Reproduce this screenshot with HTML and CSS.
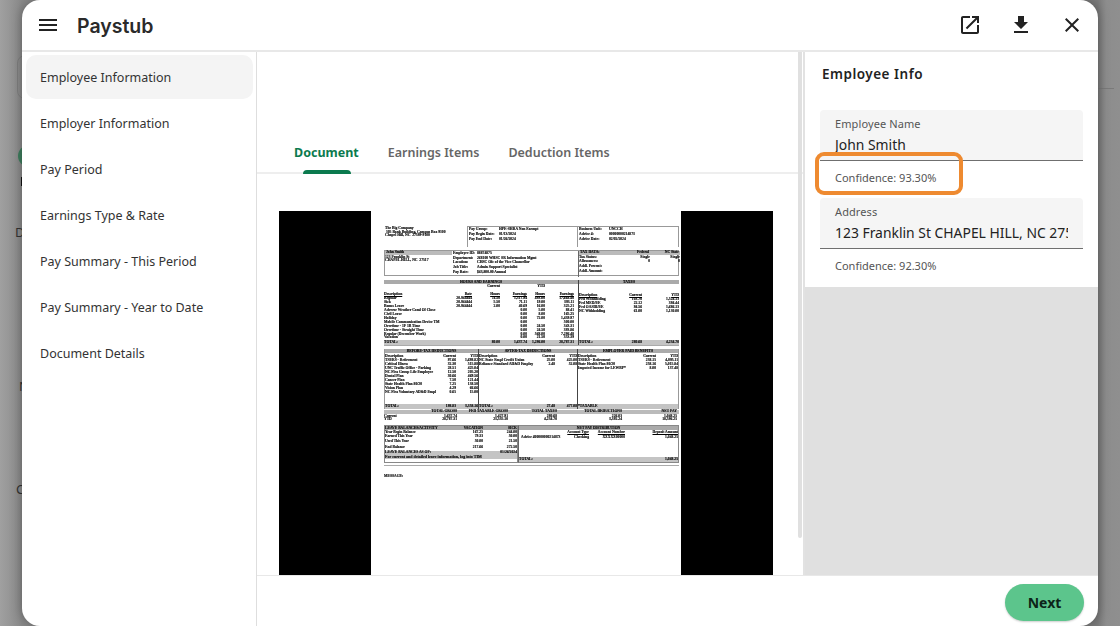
FILE: index.html
```html
<!DOCTYPE html>
<html lang="en">
<head>
<meta charset="utf-8">
<title>Paystub</title>
<link rel="stylesheet" href="styles.css">
</head>
<body>
<div class="backdrop">
  <span class="behind behind-card"></span>
  <span class="behind behind-dot"></span>
  <span class="behind behind-bar"></span>
  <span class="behind behind-d">D</span>
  <span class="behind behind-n">N</span>
  <span class="behind behind-c">C</span>
  <span class="behind behind-line"></span>

  <div class="modal">
    <header class="topbar">
      <svg class="icon menu-icon" viewBox="0 0 24 24"><path d="M3 18h18v-2H3v2zm0-5h18v-2H3v2zm0-7v2h18V6H3z"/></svg>
      <h1 class="title">Paystub</h1>
      <div class="actions">
        <svg class="icon" viewBox="0 0 24 24"><path d="M19 19H5V5h7V3H5c-1.11 0-2 .9-2 2v14c0 1.1.89 2 2 2h14c1.1 0 2-.9 2-2v-7h-2v7zM14 3v2h3.59l-9.83 9.83 1.41 1.41L19 6.41V10h2V3h-7z"/></svg>
        <svg class="icon" viewBox="0 0 24 24"><path d="M19 9h-4V3H9v6H5l7 7 7-7zM5 18v2h14v-2H5z"/></svg>
        <svg class="icon" viewBox="0 0 24 24"><path d="M19 6.41L17.59 5 12 10.59 6.41 5 5 6.41 10.59 12 5 17.59 6.41 19 12 13.41 17.59 19 19 17.59 13.41 12 19 6.41z"/></svg>
      </div>
    </header>

    <div class="body">
      <nav class="sidebar">
        <a class="nav-item active">Employee Information</a>
        <a class="nav-item">Employer Information</a>
        <a class="nav-item">Pay Period</a>
        <a class="nav-item">Earnings Type &amp; Rate</a>
        <a class="nav-item">Pay Summary - This Period</a>
        <a class="nav-item">Pay Summary - Year to Date</a>
        <a class="nav-item">Document Details</a>
      </nav>

      <div class="main">
        <div class="panes">
          <section class="viewer">
            <div class="tabs">
              <span class="tab tab-active">Document</span>
              <span class="tab">Earnings Items</span>
              <span class="tab">Deduction Items</span>
            </div>
            <div class="doc-wrap">
              <div class="doc-black">
                <div class="doc">

                  <div class="d-top">
                    <div class="d-cell">
                      <div>The Big Company</div>
                      <div>&nbsp;105 Bank Building, Campus Box 9100</div>
                      <div>Chapel Hill, NC&nbsp; 27599-9100</div>
                    </div>
                    <div class="d-cell d-box">
                      <div class="kv"><span>Pay Group:</span><span>HPE-SHRA Non Exempt</span></div>
                      <div class="kv"><span>Pay Begin Date:</span><span>01/13/2024</span></div>
                      <div class="kv"><span>Pay End Date:</span><span>01/26/2024</span></div>
                    </div>
                    <div class="d-cell d-box d-box-r">
                      <div class="kv"><span>Business Unit:</span><span>UNCCH</span></div>
                      <div class="kv"><span>Advice #:</span><span>00000000214873</span></div>
                      <div class="kv"><span>Advice Date:</span><span>02/02/2024</span></div>
                    </div>
                  </div>

                  <div class="d-emp">
                    <div class="d-emp-left">
                      <div class="d-cell d-emp-name">
                        <div class="grey-strip">John Smith</div>
                        <div>123 Franklin St</div>
                        <div>CHAPEL HILL, NC&nbsp; 27517</div>
                      </div>
                      <div class="d-cell">
                        <div class="kv2"><span>Employee ID:</span><span>88874875</span></div>
                        <div class="kv2"><span>Department:</span><span>268100 WHSC SR Information Mgmt</span></div>
                        <div class="kv2"><span>Location:</span><span>CHSC Ofc of the Vice Chancellor</span></div>
                        <div class="kv2"><span>Job Title:</span><span>Admin Support Specialist</span></div>
                        <div class="kv2"><span>Pay Rate:</span><span>$43,800.00 Annual</span></div>
                      </div>
                    </div>
                    <div class="d-tax">
                      <div class="grey-strip tax-row"><span>TAX DATA:</span><span>Federal</span><span>NC State</span></div>
                      <div class="tax-row"><span>Tax Status:</span><span>Single</span><span>Single</span></div>
                      <div class="tax-row"><span>Allowances:</span><span>0</span><span>0</span></div>
                      <div class="tax-row"><span>Addl. Percent:</span><span></span><span></span></div>
                      <div class="tax-row"><span>Addl. Amount:</span><span></span><span></span></div>
                    </div>
                  </div>

                  <div class="d-earn">
                    <div class="d-earn-left">
                      <div class="sec-head">HOURS AND EARNINGS</div>
                      <div class="earn-row sup"><span></span><span></span><span>Current</span><span></span><span>YTD</span><span></span></div>
                      <div class="earn-row under"><span>Description</span><span>Rate</span><span>Hours</span><span>Earnings</span><span>Hours</span><span>Earnings</span></div>
                      <div class="earn-row"><span>Regular</span><span>20.944444</span><span>74.50</span><span>1,517.94</span><span>493.00</span><span>17,668.40</span></div>
                      <div class="earn-row"><span>Sick</span><span>20.944444</span><span>5.50</span><span>71.11</span><span>19.00</span><span>393.11</span></div>
                      <div class="earn-row"><span>Bonus Leave</span><span>20.944444</span><span>2.00</span><span>40.69</span><span>16.00</span><span>325.21</span></div>
                      <div class="earn-row"><span>Adverse Weather Coml Of Close</span><span></span><span></span><span>0.00</span><span>5.00</span><span>88.41</span></div>
                      <div class="earn-row"><span>Civil Leave</span><span></span><span></span><span>0.00</span><span>8.00</span><span>165.25</span></div>
                      <div class="earn-row"><span>Holiday</span><span></span><span></span><span>0.00</span><span>72.00</span><span>1,439.97</span></div>
                      <div class="earn-row"><span>Mobile Communication Device TM</span><span></span><span></span><span>0.00</span><span></span><span>500.00</span></div>
                      <div class="earn-row"><span>Overtime - 1F 1B Time</span><span></span><span></span><span>0.00</span><span>24.50</span><span>343.31</span></div>
                      <div class="earn-row"><span>Overtime - Straight Time</span><span></span><span></span><span>0.00</span><span>24.50</span><span>393.86</span></div>
                      <div class="earn-row"><span>Regular (December Work)</span><span></span><span></span><span>0.00</span><span>568.00</span><span>7,296.48</span></div>
                      <div class="earn-row"><span>Vacation</span><span></span><span></span><span>0.00</span><span>21.50</span><span>353.39</span></div>
                      <div class="foot earn-row"><span>TOTAL:</span><span></span><span>80.00</span><span>1,637.74</span><span>1,296.00</span><span>28,787.31</span></div>
                    </div>
                    <div class="d-earn-right">
                      <div class="sec-head">TAXES</div>
                      <div class="ded-row sup"><span></span><span></span><span></span></div>
                      <div class="ded-row under"><span>Description</span><span>Current</span><span>YTD</span></div>
                      <div class="ded-row"><span>Fed Withholding</span><span>103.70</span><span>1,524.13</span></div>
                      <div class="ded-row"><span>Fed MED/EE</span><span>22.12</span><span>394.44</span></div>
                      <div class="ded-row"><span>Fed OASDI/EE</span><span>94.56</span><span>1,686.13</span></div>
                      <div class="ded-row"><span>NC Withholding</span><span>61.00</span><span>1,130.00</span></div>
                      <div class="foot ded-row"><span>TOTAL:</span><span>280.68</span><span>4,234.70</span></div>
                    </div>
                  </div>

                  <div class="d-ded">
                    <div class="d-ded-col">
                      <div class="sec-head">BEFORE-TAX DEDUCTIONS</div>
                      <div class="ded-row"><span>Description</span><span>Current</span><span>YTD</span></div>
                      <div class="ded-row"><span>TSERS - Retirement</span><span>97.66</span><span>1,698.82</span></div>
                      <div class="ded-row"><span>Critical Illness</span><span>32.30</span><span>515.88</span></div>
                      <div class="ded-row"><span>UNC Traffic Office - Parking</span><span>28.51</span><span>425.04</span></div>
                      <div class="ded-row"><span>NC Flex Group Life Employee</span><span>12.50</span><span>205.20</span></div>
                      <div class="ded-row"><span>Dental Plan</span><span>30.66</span><span>469.56</span></div>
                      <div class="ded-row"><span>Cancer Plan</span><span>7.50</span><span>121.44</span></div>
                      <div class="ded-row"><span>State Health Plan 80/20</span><span>7.25</span><span>138.50</span></div>
                      <div class="ded-row"><span>Vision Plan</span><span>4.29</span><span>66.66</span></div>
                      <div class="ded-row"><span>NC Flex Voluntary AD&amp;D Empl</span><span>0.65</span><span>15.00</span></div>
                      <div class="foot ded-row"><span>TOTAL:</span><span>198.83</span><span>3,358.16</span></div>
                    </div>
                    <div class="d-ded-col">
                      <div class="sec-head">AFTER-TAX DEDUCTIONS</div>
                      <div class="ded-row"><span>Description</span><span>Current</span><span>YTD</span></div>
                      <div class="ded-row"><span>NC State Empl Credit Union</span><span>25.00</span><span>425.00</span></div>
                      <div class="ded-row"><span>Reliance Standard AD&amp;D Employ</span><span>2.48</span><span>52.08</span></div>
                      <div class="foot ded-row"><span>TOTAL:</span><span>27.48</span><span>477.08</span></div>
                    </div>
                    <div class="d-ded-col d-ded-last">
                      <div class="sec-head">EMPLOYER PAID BENEFITS</div>
                      <div class="ded-row"><span>Description</span><span>Current</span><span>YTD</span></div>
                      <div class="ded-row"><span>TSERS - Retirement</span><span>238.15</span><span>4,095.11</span></div>
                      <div class="ded-row"><span>State Health Plan 80/20</span><span>258.16</span><span>5,015.84</span></div>
                      <div class="ded-row"><span>Imputed Income for LEWBP*</span><span>8.00</span><span>137.48</span></div>
                      <div class="foot"><span>*TAXABLE</span></div>
                    </div>
                  </div>

                  <div class="d-tot">
                    <div class="tot-row tot-head"><span></span><span>TOTAL GROSS</span><span>FED TAXABLE GROSS</span><span>TOTAL TAXES</span><span>TOTAL DEDUCTIONS</span><span>NET PAY</span></div>
                    <div class="tot-row"><span>Current</span><span>1,637.74</span><span>1,427.91</span><span>280.68</span><span>226.03</span><span>1,048.25</span></div>
                    <div class="tot-row"><span>YTD</span><span>28,787.31</span><span>23,535.10</span><span>4,234.70</span><span>3,392.24</span><span>18,596.25</span></div>
                  </div>

                  <div class="d-net">
                    <div class="d-leave">
                      <div class="sec-head leave-row"><span>LEAVE BALANCES/ACTIVITY</span><span>VACATION</span><span>SICK</span></div>
                      <div class="leave-row"><span>Year Begin Balance</span><span>167.25</span><span>244.00</span></div>
                      <div class="leave-row"><span>Earned This Year</span><span>79.33</span><span>50.00</span></div>
                      <div class="leave-row"><span>Used This Year</span><span>50.00</span><span>21.50</span></div>
                      <div class="leave-gap"></div>
                      <div class="leave-row"><span>End Balance</span><span>217.66</span><span>272.50</span></div>
                      <div class="leave-note">
                        <div class="leave-row"><span>LEAVE BALANCES AS OF:</span><span></span><span>01/26/2024</span></div>
                        <div class="leave-hint">For current and detailed leave information, log into TIM</div>
                      </div>
                    </div>
                    <div class="d-pay">
                      <div class="sec-head">NET PAY DISTRIBUTION</div>
                      <div class="pay-row under"><span></span><span>Account Type</span><span>Account Number</span><span>Deposit Amount</span></div>
                      <div class="pay-row"><span>Advice #00000000214873</span><span>Checking</span><span>XXXXX00000</span><span>1,048.25</span></div>
                      <div class="foot pay-foot"><span>TOTAL:</span><span>1,048.25</span></div>
                    </div>
                  </div>

                  <div class="d-rule"></div>
                  <div class="d-message">MESSAGE:</div>
                </div>
              </div>
            </div>
            <span class="scrollbar"></span>
          </section>

          <aside class="info">
            <div class="info-card">
              <h2 class="info-title">Employee Info</h2>
              <div class="field">
                <label class="field-label">Employee Name</label>
                <div class="field-value">John Smith</div>
              </div>
              <div class="confidence">Confidence: 93.30%</div>
              <div class="field">
                <label class="field-label">Address</label>
                <div class="field-value">123 Franklin St CHAPEL HILL, NC 27517</div>
              </div>
              <div class="confidence">Confidence: 92.30%</div>
              <span class="callout"></span>
            </div>
          </aside>
        </div>

        <footer class="footer">
          <button class="next">Next</button>
        </footer>
      </div>
    </div>
  </div>
</div>
</body>
</html>
```

FILE: styles.css
```css
* { box-sizing: border-box; }
html, body { margin: 0; height: 100%; }
body { overflow: hidden; font-family: "Noto Sans", "Open Sans", sans-serif; }

.backdrop {
  position: relative;
  width: 1120px;
  height: 626px;
  padding: 0 22px;
  overflow: hidden;
  background: linear-gradient(90deg, #a0a0a0 0, #8a8a8a 22px, #7c7c7c 1098px, #8d8d8d 1106px, #8f8f8f 1120px);
}

/* faint page behind the dialog */
.behind { position: absolute; color: #333; font-size: 13px; line-height: 1; }
.behind-card { left: 17px; top: 55px; width: 20px; height: 44px; border: 1px solid #7f7f7f; border-radius: 8px; }
.behind-dot { left: 18px; top: 145px; width: 22px; height: 22px; border-radius: 50%; background: #3f7f5e; }
.behind-bar { left: 21px; top: 177px; width: 1px; height: 9px; background: #111; }
.behind-d { left: 15px; top: 226px; }
.behind-n { left: 19px; top: 380px; }
.behind-c { left: 16px; top: 483px; }
.behind-line { left: 1098px; top: 88px; width: 16px; height: 1px; background: #7a7a7a; }

.modal {
  position: relative;
  width: 1076px;
  height: 626px;
  display: flex;
  flex-direction: column;
  background: #fff;
  border-radius: 18px;
  overflow: hidden;
  box-shadow: 0 0 12px rgba(0, 0, 0, .35);
}

.topbar {
  flex: none;
  height: 52px;
  display: flex;
  align-items: center;
  padding: 0 14px;
  border-bottom: 2px solid #e8e8e8;
}
.icon { width: 24px; height: 24px; fill: #222; flex: none; }
.title {
  margin: 2px 0 0 17px;
  font-family: "Inter", "Noto Sans", sans-serif;
  font-size: 19.5px;
  font-weight: 600;
  color: #2a2a2a;
}
.actions { margin-left: auto; display: flex; gap: 27px; }

.body { flex: 1; display: flex; min-height: 0; }

.sidebar {
  flex: none;
  width: 235px;
  padding: 3px 3px 0 4px;
  border-right: 1px solid #dedede;
  display: flex;
  flex-direction: column;
  gap: 2px;
}
.nav-item {
  height: 44px;
  padding-left: 14px;
  display: flex;
  align-items: center;
  border-radius: 10px;
  font-size: 12.5px;
  color: #333;
}
.active { background: #f4f4f4; }

.main { flex: 1; display: flex; flex-direction: column; min-width: 0; }
.panes { height: 523px; display: flex; min-height: 0; }

.viewer {
  position: relative;
  width: 548px;
  flex: none;
  border-right: 2px solid #e2e2e2;
  overflow: hidden;
}
.tabs {
  height: 122px;
  padding: 0 0 0 37px;
  display: flex;
  align-items: flex-end;
  gap: 29px;
  border-bottom: 2px solid #eee;
}
.tab {
  position: relative;
  height: 28px;
  font-size: 12.5px;
  font-weight: 600;
  color: #666;
}
.tab-active { color: #0b7a4e; font-weight: 700; }
.tab-active::after {
  content: "";
  position: absolute;
  left: 9px;
  right: 8px;
  bottom: -2px;
  height: 4px;
  border-radius: 4px 4px 0 0;
  background: #0b7a4e;
}
.doc-wrap { padding: 37px 0 0 22px; }
.doc-black {
  width: 494px;
  height: 364px;
  background: #000;
  display: flex;
  justify-content: center;
  overflow: hidden;
}
.scrollbar {
  position: absolute;
  left: 541px;
  top: 0;
  width: 4px;
  height: 486px;
  background: #e0e0e0;
  border-radius: 0 0 2px 2px;
}

/* scanned paystub */
.doc {
  width: 310px;
  height: 364px;
  padding: 15px 2px 0 13px;
  background: #fff;
  color: #000;
  font-family: "Liberation Serif", serif;
  font-size: 3.7px;
  font-weight: 700;
  line-height: 3.7px;
  white-space: nowrap;
  -webkit-text-stroke: .12px #000;
  filter: blur(.25px);
}
.doc span { display: block; }
.d-top { display: grid; grid-template-columns: 83px 110px 102px; height: 21px; }
.d-cell { padding: 1px 1px; }
.d-box { border: .5px solid #999; border-bottom: none; border-right: none; }
.d-box-r { border-right: .5px solid #999; }
.kv { display: grid; grid-template-columns: 30px 1fr; margin-bottom: 1.5px; }
.d-emp { display: grid; grid-template-columns: 193px 102px; height: 26px; margin-top: 3px; border: .5px solid #999; }
.d-emp-left { display: grid; grid-template-columns: 67px 1fr; }
.d-emp-name { padding: 0; }
.kv2 { display: grid; grid-template-columns: 24px 1fr; margin-bottom: 1px; }
.grey-strip { background: #bbb; padding: 0 1px; margin-bottom: 1px; }
.tax-row { display: grid; grid-template-columns: 1fr 40px 30px; text-align: right; margin-bottom: 1px; }
.tax-row span:first-child { text-align: left; }
.d-tax { border-left: .5px solid #666; }
.d-earn { display: grid; grid-template-columns: 194px 101px; height: 66px; margin-top: 4px; border-bottom: 1px solid #aaa; }
.d-earn-left, .d-earn-right, .d-ded-col, .d-pay { position: relative; }
.d-earn-right { border-left: 1px solid #444; }
.d-earn-right .ded-row { grid-template-columns: 1fr 24px 37px; }
.sec-head { background: #aaa; text-align: center; height: 4px; line-height: 4px; margin-bottom: 1px; }
.earn-row { display: grid; grid-template-columns: 50px 38px 28px 27px 18px 29px; text-align: right; line-height: 3.95px; }
.earn-row span:first-child, .ded-row span:first-child { text-align: left; }
.ded-row { display: grid; grid-template-columns: 1fr 18px 22px; text-align: right; line-height: 4px; }
.sup { height: 8px; }
.under span:not(:empty) { text-decoration: underline; }
.foot {
  position: absolute;
  left: 0;
  right: 0;
  bottom: 0;
  height: 5px;
  line-height: 5px;
  background: #c4c4c4;
}
.d-ded { display: grid; grid-template-columns: 95px 99px 101px; height: 60px; margin-top: 3px; }
.d-ded-col { border-right: .5px solid #444; }
.d-ded-col:first-child { border-left: .5px solid #999; }
.d-ded-last { border-right: .5px solid #999; }
.d-tot { margin-top: 1px; background: #fff; height: 14px; }
.tot-row { display: grid; grid-template-columns: 30px 43px 51px 49px 65px 55px; text-align: right; }
.tot-row span:first-child { text-align: left; }
.tot-head { background: #bbb; margin-bottom: 1px; }
.d-net { display: grid; grid-template-columns: 134px 161px; height: 38px; margin-top: 1px; }
.d-leave { position: relative; border: .5px solid #888; }
.leave-row { display: grid; grid-template-columns: 1fr 30px 34px; text-align: right; margin-bottom: .7px; }
.leave-row span:first-child { text-align: left; }
.leave-row.sec-head { margin-bottom: 1px; }
.leave-gap { height: 2px; }
.leave-note { background: #c4c4c4; padding-top: .5px; }
.leave-hint { font-size: 4px; }
.d-pay { border: .5px solid #888; border-left: 1px solid #666; }
.pay-row { display: grid; grid-template-columns: 42px 28px 36px 1fr; text-align: right; margin-bottom: 1px; }
.pay-row span:first-child { text-align: left; padding-left: 2px; }
.pay-foot { display: flex; justify-content: space-between; }
.d-rule { height: 1px; margin-top: 2px; background: #aaa; }
.d-message { margin-top: 9px; }

/* info panel */
.info { flex: 1; background: #e0e0e0; min-width: 0; }
.info-card {
  position: relative;
  height: 235px;
  padding: 13px 15px 0 15px;
  background: #fff;
}
.info-title {
  margin: 0 0 26px 2px;
  font-size: 13.5px;
  line-height: 19px;
  font-weight: 600;
  letter-spacing: .5px;
  color: #222;
}
.field {
  height: 51px;
  padding: 5px 15px 0;
  background: #f5f5f5;
  border-radius: 4px 4px 0 0;
  border-bottom: 1px solid #6f6f6f;
}
.field-label { display: block; font-size: 11px; line-height: 17px; color: #555; letter-spacing: .1px; }
.field-value {
  margin-top: 2px;
  font-size: 13.9px;
  line-height: 22px;
  color: #222;
  white-space: nowrap;
  overflow: hidden;
}
.confidence {
  height: 37px;
  padding: 9px 15px 0;
  font-size: 11px;
  line-height: 16px;
  color: #555;
}
.callout {
  position: absolute;
  left: 10px;
  top: 100px;
  width: 148px;
  height: 43px;
  border: 4px solid #ee8a30;
  border-radius: 9px;
}

.footer {
  height: 51px;
  flex: none;
  display: flex;
  justify-content: flex-end;
  padding: 8px 14px 0 0;
  border-top: 1px solid #e8e8e8;
}
.next {
  width: 79px;
  height: 37px;
  border: none;
  border-radius: 19px;
  background: #5cc58c;
  box-shadow: 0 1px 2px rgba(0, 0, 0, .2);
  color: #0c2418;
  font-family: "Noto Sans", sans-serif;
  font-size: 14px;
  font-weight: 700;
}
```
